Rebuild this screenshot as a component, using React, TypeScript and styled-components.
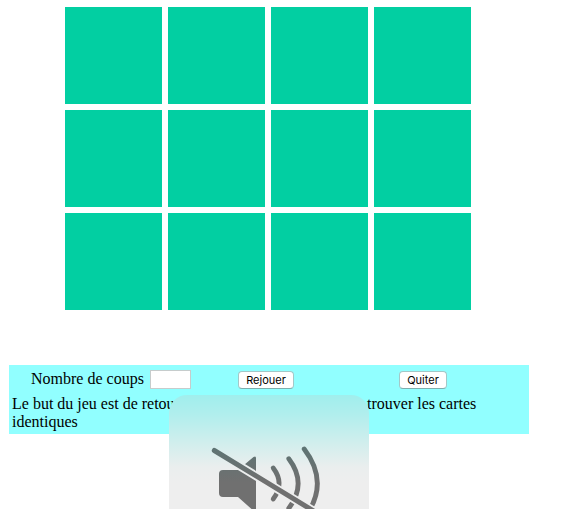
import React from "react";
import styled, { createGlobalStyle } from "styled-components";

const GlobalStyle = createGlobalStyle`
  html, body { height: 100%; }
  body { margin: 0; background: #fff; overflow: hidden; }
`;

const Page = styled.main`
  position: relative;
  height: 509px;
  overflow: hidden;
  box-sizing: border-box;
  padding: 7px 0 0 9px;
  color: #000;
  font: 16px/18px "Liberation Serif", "Times New Roman", serif;
`;

const Board = styled.section`
  display: grid;
  grid-template-columns: repeat(4, 97px);
  grid-auto-rows: 97px;
  gap: 6px;
  margin-left: 56px;
`;

const Card = styled.div`
  background: #02cfa2;
`;

const Panel = styled.section`
  width: 520px;
  height: 69px;
  margin-top: 55px;
  box-sizing: border-box;
  padding: 5px 3px 0;
  background: #91ffff;
`;

const Controls = styled.div`
  display: grid;
  grid-template-columns: 207px 93px 1fr;
  height: 20px;
`;

const Counter = styled.label`
  display: flex;
  align-items: flex-start;
  gap: 6px;
  padding-left: 19px;
  white-space: nowrap;
`;

const CountInput = styled.input`
  width: 41px;
  height: 19px;
  margin: 0;
  box-sizing: border-box;
  border: 1px solid #c6cccc;
  border-radius: 0;
  padding: 1px;
  background: #fff;
`;

const Cell = styled.div<{ $indent: number }>`
  padding: 1px 0 0 ${(p) => p.$indent}px;
`;

const Button = styled.button<{ $width: number }>`
  display: block;
  width: ${(p) => p.$width}px;
  height: 18px;
  padding: 0;
  border: 1px solid #a3c8c8;
  border-bottom-color: #7faeae;
  border-radius: 4px;
  background: #fff;
  color: #000;
  font: 11px/15px Inter, "Liberation Sans", sans-serif;
  white-space: nowrap;
`;

const Rules = styled.p`
  margin: 5px 0 0;
`;

const Goal = styled.span`
  display: inline-block;
  width: 351px;
  white-space: nowrap;
`;

const VolumeOverlay = styled.aside`
  position: absolute;
  left: 169px;
  top: 395px;
  width: 200px;
  height: 200px;
  border-radius: 18px;
  background: linear-gradient(#a0eeed 0, #b1eeed 20px, #d3eeed 50px, #eaeeee 72px, #eee 88px);
`;

const MutedIcon = () => (
  <svg width="200" height="200" viewBox="169 395 200 200" fill="none" aria-label="Son coupé">
    <defs>
      <linearGradient id="ink" gradientUnits="userSpaceOnUse" x1="0" y1="445" x2="0" y2="482">
        <stop offset="0" stopColor="#5c7474" />
        <stop offset="1" stopColor="#707070" />
      </linearGradient>
      <mask id="gap" maskUnits="userSpaceOnUse" x="169" y="395" width="200" height="200">
        <rect x="169" y="395" width="200" height="200" fill="#fff" />
        <path d="M214.3 450.5 330 521" stroke="#000" strokeWidth="8.6" strokeLinecap="round" />
      </mask>
    </defs>
    <g mask="url(#gap)">
      <path
        d="M223 470H238L253.5 457Q256 455.5 256 458V513L238 497H223Q219 497 219 493V474Q219 470 223 470Z"
        fill="url(#ink)"
      />
      <g stroke="url(#ink)" strokeWidth="4.8" strokeLinecap="round">
        <path d="M273.2 468Q285 483.5 273.2 499" />
        <path d="M288.8 458.7Q307.5 483.5 288.8 508.3" />
        <path d="M304.2 449Q330.5 483.5 304.2 518" />
      </g>
    </g>
    <path d="M214.3 450.5 330 521" stroke="url(#ink)" strokeWidth="5" strokeLinecap="round" />
  </svg>
);

const cards = Array.from({ length: 12 }, (_, i) => i);

export default function App() {
  return (
    <>
      <GlobalStyle />
      <Page>
        <Board>
          {cards.map((id) => (
            <Card key={id} />
          ))}
        </Board>
        <Panel>
          <Controls>
            <Counter>
              Nombre de coups
              <CountInput readOnly />
            </Counter>
            <Cell $indent={19}>
              <Button $width={56}>Rejouer</Button>
            </Cell>
            <Cell $indent={87}>
              <Button $width={48}>Quiter</Button>
            </Cell>
          </Controls>
          <Rules>
            <Goal>Le but du jeu est de retourner les cartes afin de</Goal> trouver les cartes identiques
          </Rules>
        </Panel>
        <VolumeOverlay>
          <MutedIcon />
        </VolumeOverlay>
      </Page>
    </>
  );
}
